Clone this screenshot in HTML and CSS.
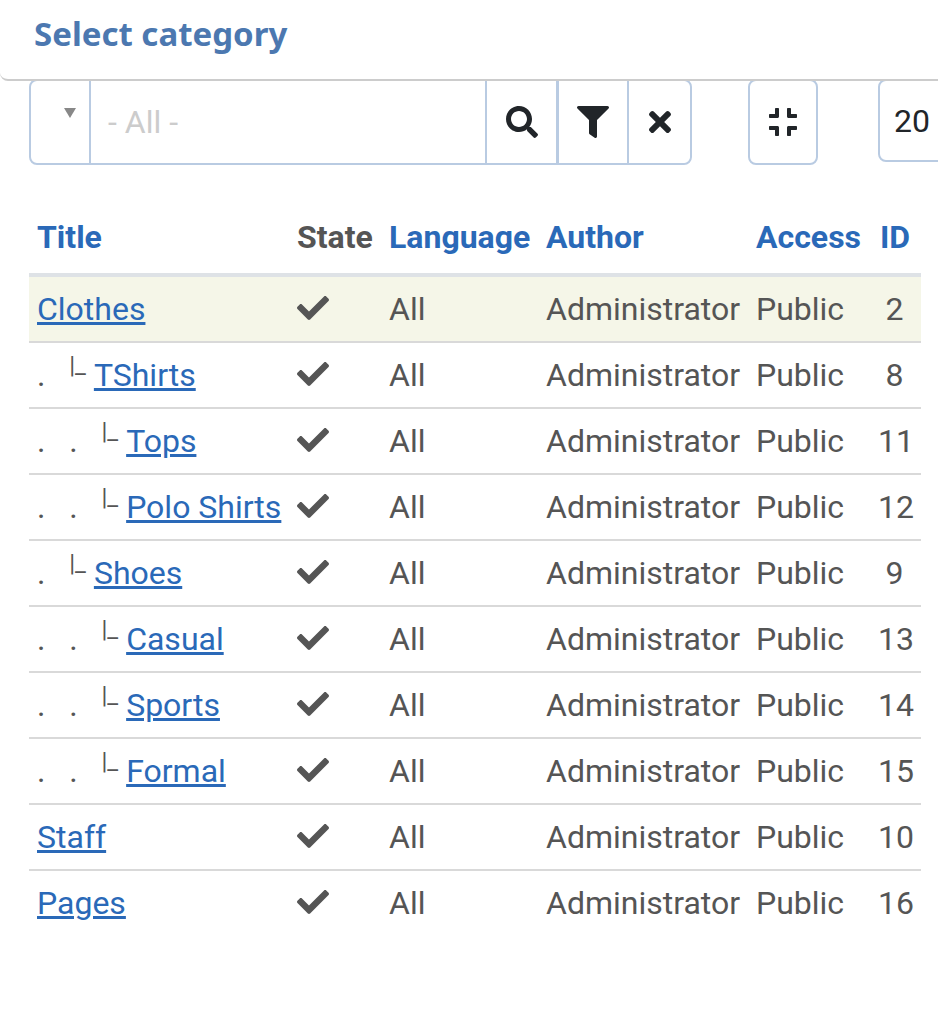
FILE: index.html
```html
<!DOCTYPE html>
<html lang="en">
<head>
<meta charset="utf-8">
<title>Select category</title>
<link rel="stylesheet" href="styles.css">
</head>
<body>
<header class="modal-head"><h1>Select category</h1></header>
<main class="content">
  <div class="toolbar">
    <div class="search-group">
      <div class="select-box"><span class="caret"></span></div>
      <div class="search-input">- All -</div>
      <button class="tool-btn btn-search" type="button"><svg class="ico ico-search" viewBox="0 0 512 512"><path d="M505 442.7L405.3 343c-4.5-4.5-10.6-7-17-7H372c27.6-35.3 44-79.7 44-128C416 93.1 322.9 0 208 0S0 93.1 0 208s93.1 208 208 208c48.3 0 92.7-16.4 128-44v16.3c0 6.4 2.5 12.5 7 17l99.7 99.7c9.4 9.4 24.6 9.4 33.9 0l28.3-28.3c9.4-9.4 9.4-24.6.1-34zM208 336c-70.7 0-128-57.2-128-128 0-70.7 57.2-128 128-128 70.7 0 128 57.2 128 128 0 70.7-57.2 128-128 128z"/></svg></button>
      <button class="tool-btn btn-filter" type="button"><svg class="ico ico-filter" viewBox="0 0 512 512"><path d="M487.976 0H24.028C2.71 0-8.047 25.866 7.058 40.971L192 225.941V432c0 7.831 3.821 15.17 10.237 19.662l80 55.98C298.02 518.69 320 507.493 320 487.98V225.941l184.947-184.97C520.021 25.896 509.338 0 487.976 0z"/></svg></button>
      <button class="tool-btn btn-clear" type="button"><svg class="ico ico-times" viewBox="0 0 352 512"><path d="M242.72 256l100.07-100.07c12.28-12.28 12.28-32.19 0-44.48l-22.24-22.24c-12.28-12.28-32.19-12.28-44.48 0L176 189.28 75.93 89.21c-12.28-12.28-32.19-12.28-44.48 0L9.21 111.45c-12.28 12.28-12.28 32.19 0 44.48L109.28 256 9.21 356.07c-12.28 12.28-12.28 32.19 0 44.48l22.24 22.24c12.28 12.28 32.2 12.28 44.48 0L176 322.72l100.07 100.07c12.28 12.28 32.2 12.28 44.48 0l22.24-22.24c12.28-12.28 12.28-32.19 0-44.48L242.72 256z"/></svg></button>
    </div>
    <button class="tool-btn btn-compress" type="button"><svg class="ico ico-compress" viewBox="0 0 448 512"><path d="M436 192H312c-13.3 0-24-10.7-24-24V44c0-6.6 5.4-12 12-12h40c6.6 0 12 5.4 12 12v84h84c6.6 0 12 5.4 12 12v40c0 6.6-5.4 12-12 12zm-276-24V44c0-6.6-5.4-12-12-12h-40c-6.6 0-12 5.4-12 12v84H12c-6.6 0-12 5.4-12 12v40c0 6.6 5.4 12 12 12h124c13.3 0 24-10.7 24-24zm0 300V344c0-13.3-10.7-24-24-24H12c-6.6 0-12 5.4-12 12v40c0 6.6 5.4 12 12 12h84v84c0 6.6 5.4 12 12 12h40c6.6 0 12-5.4 12-12zm192 0v-84h84c6.6 0 12-5.4 12-12v-40c0-6.6-5.4-12-12-12H312c-13.3 0-24 10.7-24 24v124c0 6.6 5.4 12 12 12h40c6.6 0 12-5.4 12-12z"/></svg></button>
    <div class="limit-box">20</div>
  </div>
  <table class="cats">
    <colgroup><col class="c-title"><col class="c-state"><col class="c-lang"><col class="c-author"><col class="c-access"><col class="c-id"></colgroup>
    <thead>
      <tr><th><a>Title</a></th><th class="muted">State</th><th><a>Language</a></th><th><a>Author</a></th><th><a>Access</a></th><th><a>ID</a></th></tr>
    </thead>
    <tbody>
      <tr class="active"><td><a href="#">Clothes</a></td><td><svg class="check" viewBox="0 0 512 512"><path d="M173.898 439.404l-166.4-166.4c-9.997-9.997-9.997-26.206 0-36.204l36.203-36.204c9.997-9.998 26.207-9.998 36.204 0L192 312.69 432.095 72.596c9.997-9.997 26.207-9.997 36.204 0l36.203 36.204c9.997 9.997 9.997 26.206 0 36.204l-294.4 294.401c-9.998 9.997-26.207 9.997-36.204-.001z"/></svg></td><td>All</td><td>Administrator</td><td>Public</td><td class="num">2</td></tr>
      <tr><td>.&nbsp;&nbsp;&nbsp;<sup>|_</sup>&nbsp;<a href="#">TShirts</a></td><td><svg class="check" viewBox="0 0 512 512"><path d="M173.898 439.404l-166.4-166.4c-9.997-9.997-9.997-26.206 0-36.204l36.203-36.204c9.997-9.998 26.207-9.998 36.204 0L192 312.69 432.095 72.596c9.997-9.997 26.207-9.997 36.204 0l36.203 36.204c9.997 9.997 9.997 26.206 0 36.204l-294.4 294.401c-9.998 9.997-26.207 9.997-36.204-.001z"/></svg></td><td>All</td><td>Administrator</td><td>Public</td><td class="num">8</td></tr>
      <tr><td>.&nbsp;&nbsp;&nbsp;.&nbsp;&nbsp;&nbsp;<sup>|_</sup>&nbsp;<a href="#">Tops</a></td><td><svg class="check" viewBox="0 0 512 512"><path d="M173.898 439.404l-166.4-166.4c-9.997-9.997-9.997-26.206 0-36.204l36.203-36.204c9.997-9.998 26.207-9.998 36.204 0L192 312.69 432.095 72.596c9.997-9.997 26.207-9.997 36.204 0l36.203 36.204c9.997 9.997 9.997 26.206 0 36.204l-294.4 294.401c-9.998 9.997-26.207 9.997-36.204-.001z"/></svg></td><td>All</td><td>Administrator</td><td>Public</td><td class="num">11</td></tr>
      <tr><td>.&nbsp;&nbsp;&nbsp;.&nbsp;&nbsp;&nbsp;<sup>|_</sup>&nbsp;<a href="#">Polo Shirts</a></td><td><svg class="check" viewBox="0 0 512 512"><path d="M173.898 439.404l-166.4-166.4c-9.997-9.997-9.997-26.206 0-36.204l36.203-36.204c9.997-9.998 26.207-9.998 36.204 0L192 312.69 432.095 72.596c9.997-9.997 26.207-9.997 36.204 0l36.203 36.204c9.997 9.997 9.997 26.206 0 36.204l-294.4 294.401c-9.998 9.997-26.207 9.997-36.204-.001z"/></svg></td><td>All</td><td>Administrator</td><td>Public</td><td class="num">12</td></tr>
      <tr><td>.&nbsp;&nbsp;&nbsp;<sup>|_</sup>&nbsp;<a href="#">Shoes</a></td><td><svg class="check" viewBox="0 0 512 512"><path d="M173.898 439.404l-166.4-166.4c-9.997-9.997-9.997-26.206 0-36.204l36.203-36.204c9.997-9.998 26.207-9.998 36.204 0L192 312.69 432.095 72.596c9.997-9.997 26.207-9.997 36.204 0l36.203 36.204c9.997 9.997 9.997 26.206 0 36.204l-294.4 294.401c-9.998 9.997-26.207 9.997-36.204-.001z"/></svg></td><td>All</td><td>Administrator</td><td>Public</td><td class="num">9</td></tr>
      <tr><td>.&nbsp;&nbsp;&nbsp;.&nbsp;&nbsp;&nbsp;<sup>|_</sup>&nbsp;<a href="#">Casual</a></td><td><svg class="check" viewBox="0 0 512 512"><path d="M173.898 439.404l-166.4-166.4c-9.997-9.997-9.997-26.206 0-36.204l36.203-36.204c9.997-9.998 26.207-9.998 36.204 0L192 312.69 432.095 72.596c9.997-9.997 26.207-9.997 36.204 0l36.203 36.204c9.997 9.997 9.997 26.206 0 36.204l-294.4 294.401c-9.998 9.997-26.207 9.997-36.204-.001z"/></svg></td><td>All</td><td>Administrator</td><td>Public</td><td class="num">13</td></tr>
      <tr><td>.&nbsp;&nbsp;&nbsp;.&nbsp;&nbsp;&nbsp;<sup>|_</sup>&nbsp;<a href="#">Sports</a></td><td><svg class="check" viewBox="0 0 512 512"><path d="M173.898 439.404l-166.4-166.4c-9.997-9.997-9.997-26.206 0-36.204l36.203-36.204c9.997-9.998 26.207-9.998 36.204 0L192 312.69 432.095 72.596c9.997-9.997 26.207-9.997 36.204 0l36.203 36.204c9.997 9.997 9.997 26.206 0 36.204l-294.4 294.401c-9.998 9.997-26.207 9.997-36.204-.001z"/></svg></td><td>All</td><td>Administrator</td><td>Public</td><td class="num">14</td></tr>
      <tr><td>.&nbsp;&nbsp;&nbsp;.&nbsp;&nbsp;&nbsp;<sup>|_</sup>&nbsp;<a href="#">Formal</a></td><td><svg class="check" viewBox="0 0 512 512"><path d="M173.898 439.404l-166.4-166.4c-9.997-9.997-9.997-26.206 0-36.204l36.203-36.204c9.997-9.998 26.207-9.998 36.204 0L192 312.69 432.095 72.596c9.997-9.997 26.207-9.997 36.204 0l36.203 36.204c9.997 9.997 9.997 26.206 0 36.204l-294.4 294.401c-9.998 9.997-26.207 9.997-36.204-.001z"/></svg></td><td>All</td><td>Administrator</td><td>Public</td><td class="num">15</td></tr>
      <tr><td><a href="#">Staff</a></td><td><svg class="check" viewBox="0 0 512 512"><path d="M173.898 439.404l-166.4-166.4c-9.997-9.997-9.997-26.206 0-36.204l36.203-36.204c9.997-9.998 26.207-9.998 36.204 0L192 312.69 432.095 72.596c9.997-9.997 26.207-9.997 36.204 0l36.203 36.204c9.997 9.997 9.997 26.206 0 36.204l-294.4 294.401c-9.998 9.997-26.207 9.997-36.204-.001z"/></svg></td><td>All</td><td>Administrator</td><td>Public</td><td class="num">10</td></tr>
      <tr class="last"><td><a href="#">Pages</a></td><td><svg class="check" viewBox="0 0 512 512"><path d="M173.898 439.404l-166.4-166.4c-9.997-9.997-9.997-26.206 0-36.204l36.203-36.204c9.997-9.998 26.207-9.998 36.204 0L192 312.69 432.095 72.596c9.997-9.997 26.207-9.997 36.204 0l36.203 36.204c9.997 9.997 9.997 26.206 0 36.204l-294.4 294.401c-9.998 9.997-26.207 9.997-36.204-.001z"/></svg></td><td>All</td><td>Administrator</td><td>Public</td><td class="num">16</td></tr>
    </tbody>
  </table>
</main>
</body>
</html>
```
FILE: styles.css
```css
html, body { margin: 0; padding: 0; height: 100%; overflow: hidden; background: #fff; }
body { font-family: Roboto, "Liberation Sans", sans-serif; font-size: 32px; line-height: 48px; color: #555; }

.modal-head {
  position: relative; z-index: 2;
  height: 79px;
  background: #fff;
  border-bottom: 2px solid #ccc;
  border-bottom-left-radius: 8px;
}
.modal-head h1 {
  margin: 0; padding: 11px 0 0 34px;
  font-family: "Noto Sans", "Open Sans", sans-serif; font-weight: 700; font-size: 33px; line-height: 46px;
  color: #4c78b0;
}

.content { padding: 0 0 0 29px; }

.toolbar { display: flex; align-items: flex-start; margin-top: -2px; overflow: hidden; }
.search-group { display: flex; flex: none; height: 86px; width: 663px; box-sizing: border-box;
  border: 2px solid #b9cbe2; border-radius: 8px; }
.select-box { width: 58px; border-right: 2px solid #b9cbe2; position: relative; flex: none; }
.caret { position: absolute; left: 33px; top: 27px; width: 0; height: 0;
  border-left: 6px solid transparent; border-right: 6px solid transparent; border-top: 10px solid #888; }
.search-input { flex: 1; padding: 17px 0 0 17px; color: #ccc; font-size: 32px; line-height: 48px; }
.tool-btn { background: #fff; padding: 0; display: flex; align-items: center; justify-content: center; border: 0; }
.btn-search { width: 74px; border-left: 2px solid #b9cbe2; border-right: 3px solid #b9cbe2; flex: none; box-sizing: border-box; }
.btn-filter { width: 70px; border-right: 2px solid #b9cbe2; flex: none; box-sizing: border-box; }
.btn-clear { flex: none; width: 61px; border-radius: 0 8px 8px 0; }
.btn-compress { flex: none; width: 70px; height: 86px; box-sizing: border-box; margin-left: 56px; border: 2px solid #b9cbe2; border-radius: 8px; }
.limit-box { flex: none; margin-left: 60px; width: 100px; height: 83px; box-sizing: border-box; border: 2px solid #b9cbe2; border-radius: 8px; padding: 16px 0 0 14px; color: #212529; }
.ico { display: block; fill: #212529; }
.ico-search { width: 32px; height: 32px; }
.ico-filter { width: 32px; height: 32px; }
.ico-times { width: 22px; height: 32px; }
.ico-compress { width: 28px; height: 32px; }

.cats { margin-top: 40px; border-collapse: collapse; table-layout: fixed; width: 892px; }
.c-title { width: 260px; } .c-state { width: 92px; } .c-lang { width: 157px; }
.c-author { width: 210px; } .c-access { width: 124px; } .c-id { width: 49px; }
.cats th, .cats td { padding: 8px; text-align: left; white-space: nowrap; overflow: visible; }
.cats th { font-weight: 700; padding-bottom: 12px; border-bottom: 4px solid #dee2e6; }
.cats th a { color: #2a69b8; }
.cats th.muted { color: #555; }
.cats td { border-bottom: 2px solid #d9d9d9; }
.cats tr.last td { border-bottom: 0; }
.cats tr.active td { background: #f5f6e8; }
.cats td a { color: #2a69b8; text-decoration: underline; }
.cats td.num { text-align: center; padding-left: 6px; padding-right: 10px; }
.cats sup { font-size: 24px; line-height: 0; position: relative; top: -13px; vertical-align: baseline; }
.check { display: block; width: 32px; height: 32px; fill: #555; margin-bottom: 3px; }
```
